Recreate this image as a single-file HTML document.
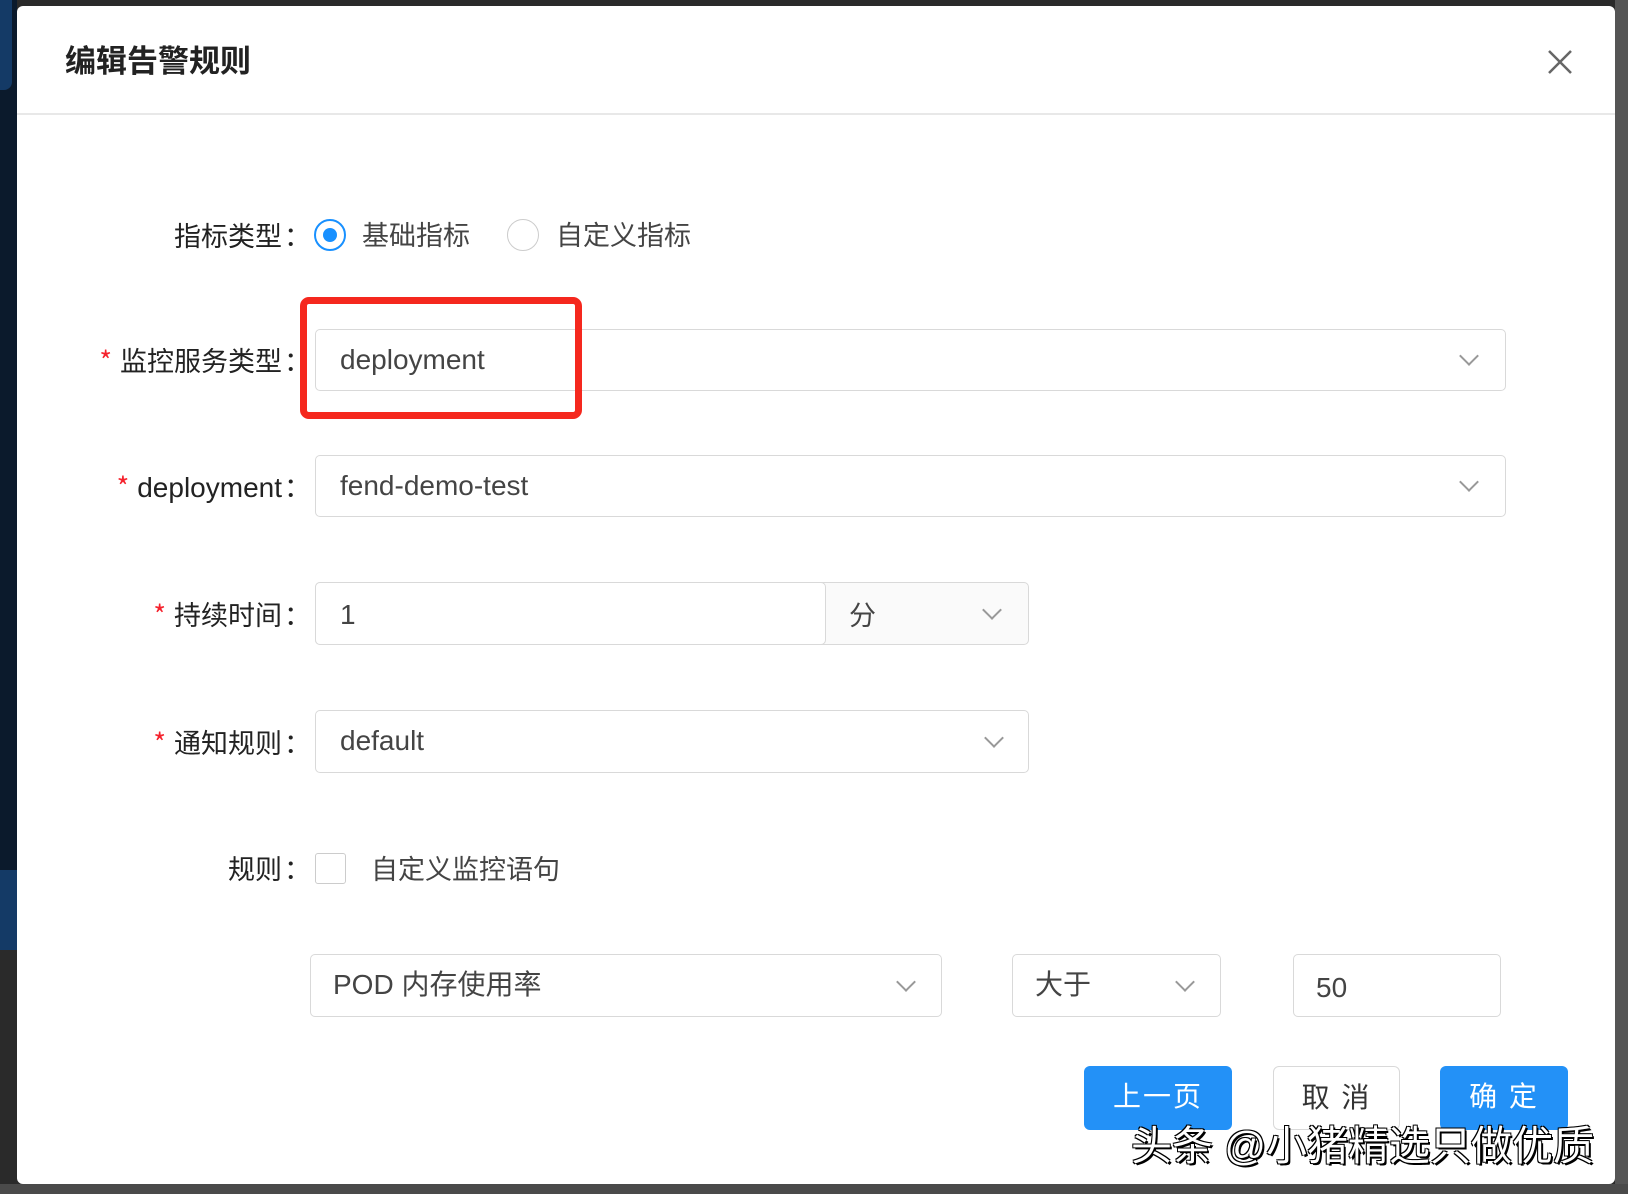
<!DOCTYPE html>
<html><head><meta charset="utf-8"><style>
*{box-sizing:border-box;margin:0;padding:0}
body{width:1628px;height:1194px;background:#2a2a2a;position:relative;overflow:hidden;font-family:"Liberation Sans","Noto Sans CJK SC",sans-serif;color:#333}
.abs{position:absolute}
.modal{left:17px;top:6px;width:1598px;height:1178px;background:#fff;border-radius:6px}
.lbl{position:absolute;right:1329px;font-size:27px;color:#222;white-space:nowrap;line-height:32px;font-family:"Noto Sans CJK SC","Liberation Sans",sans-serif}
.lbl .s{color:#f5222d;margin-right:8px}
.lbl .c{margin-left:2px;margin-right:-12px}
.box{position:absolute;border:1.5px solid #d9d9d9;border-radius:5px;background:#fff;font-size:28px;color:#444;line-height:60px;padding-left:24px}
.arr{position:absolute;width:14px;height:14px;border-right:2px solid #999;border-bottom:2px solid #999;transform:rotate(45deg)}
.btn{position:absolute;border-radius:6px;font-size:28px;text-align:center;line-height:62px;letter-spacing:2px}
</style></head><body>
<div class="abs" style="left:0;top:0;width:17px;height:950px;background:#0b1a2c"></div>
<div class="abs" style="left:0;top:0;width:12px;height:90px;background:#143a66;border-radius:0 0 8px 0"></div>
<div class="abs" style="left:0;top:870px;width:17px;height:80px;background:#143a66"></div>
<div class="abs" style="left:1615px;top:0;width:13px;height:1194px;background:#555"></div>
<div class="abs" style="left:0;top:1184px;width:1628px;height:10px;background:#4a4a4a"></div>
<div class="abs modal">
 <div class="abs" style="left:48px;top:30px;font-size:31px;font-weight:bold;color:#222">编辑告警规则</div>
 <svg class="abs" style="left:1531px;top:44px" width="24" height="24" viewBox="0 0 24 24"><path d="M1 1L23 23M23 1L1 23" stroke="#666" stroke-width="2.5" fill="none"/></svg>
 <div class="abs" style="left:0;top:107px;width:1598px;height:1.5px;background:#e8e8e8"></div>
</div>
<div class="lbl" style="top:219px">指标类型<span class="c">：</span></div>
<div class="abs" style="left:314px;top:219px;width:32px;height:32px;border:2px solid #1890ff;border-radius:50%"></div>
<div class="abs" style="left:323px;top:228px;width:14px;height:14px;background:#1890ff;border-radius:50%"></div>
<div class="abs" style="left:362px;top:214px;font-size:27px;color:#444">基础指标</div>
<div class="abs" style="left:507px;top:219px;width:32px;height:32px;border:1.5px solid #ccc;border-radius:50%"></div>
<div class="abs" style="left:556px;top:214px;font-size:27px;color:#444">自定义指标</div>

<div class="lbl" style="top:344px"><span class="s">*</span>监控服务类型<span class="c">：</span></div>
<div class="box" style="left:315px;top:329px;width:1191px;height:62px">deployment</div>
<div class="arr" style="left:1462px;top:349px"></div>
<div class="abs" style="left:300px;top:297px;width:282px;height:122px;border:7px solid #f5281e;border-radius:9px"></div>

<div class="lbl" style="top:470px"><span class="s">*</span><span style="font-family:'Liberation Sans',sans-serif;font-size:28px">deployment</span><span class="c">：</span></div>
<div class="box" style="left:315px;top:455px;width:1191px;height:62px">fend-demo-test</div>
<div class="arr" style="left:1462px;top:475px"></div>

<div class="lbl" style="top:598px"><span class="s">*</span>持续时间<span class="c">：</span></div>
<div class="box" style="left:315px;top:582px;width:714px;height:63px;background:#fafafa;padding-left:0"></div>
<div class="box" style="left:315px;top:582px;width:511px;height:63px;line-height:64px">1</div>
<div class="abs" style="left:849px;top:594px;font-size:27px;color:#444">分</div>
<div class="arr" style="left:985px;top:603px"></div>

<div class="lbl" style="top:726px"><span class="s">*</span>通知规则<span class="c">：</span></div>
<div class="box" style="left:315px;top:710px;width:714px;height:63px">default</div>
<div class="arr" style="left:987px;top:731px"></div>

<div class="lbl" style="top:852px">规则<span class="c">：</span></div>
<div class="abs" style="left:315px;top:853px;width:31px;height:31px;border:1.5px solid #ccc;border-radius:3px"></div>
<div class="abs" style="left:371px;top:848px;font-size:27px;color:#444">自定义监控语句</div>

<div class="box" style="left:310px;top:954px;width:632px;height:63px;padding-left:22px">POD 内存使用率</div>
<div class="arr" style="left:899px;top:975px"></div>
<div class="box" style="left:1012px;top:954px;width:209px;height:63px;padding-left:22px">大于</div>
<div class="arr" style="left:1178px;top:975px"></div>
<div class="box" style="left:1293px;top:954px;width:208px;height:63px;padding-left:22px;line-height:66px">50</div>

<div class="btn" style="left:1084px;top:1066px;width:148px;height:64px;background:#2391f7;color:#fff">上一页</div>
<div class="btn" style="left:1273px;top:1066px;width:127px;height:64px;border:1.5px solid #d9d9d9;color:#333">取 消</div>
<div class="btn" style="left:1440px;top:1066px;width:128px;height:64px;background:#2391f7;color:#fff">确 定</div>
<div class="abs" style="left:1131px;top:1112px;font-size:41px;color:#fff;white-space:nowrap;letter-spacing:0px;text-shadow:2px 2px 0 #000,-1px -1px 0 #000,1px -1px 0 #000,-1px 1px 0 #000">头条 @小猪精选只做优质</div>
</body></html>
